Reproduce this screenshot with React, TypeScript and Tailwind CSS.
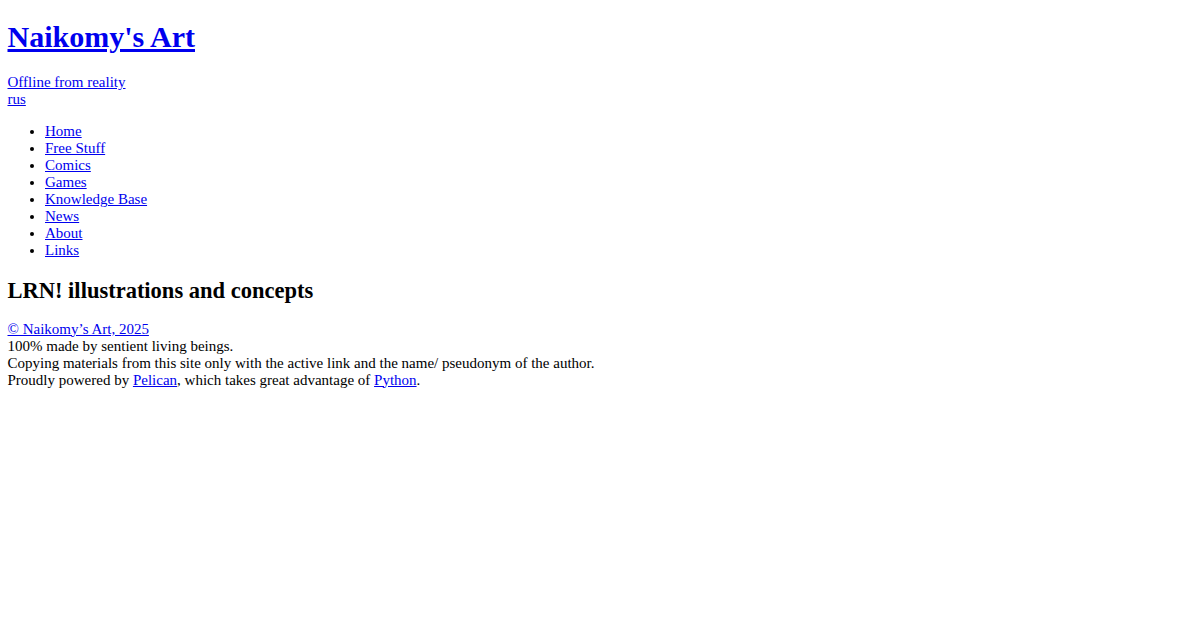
const links = ["Home", "Free Stuff", "Comics", "Games", "Knowledge Base", "News", "About", "Links"];

export default function App() {
  return (
    <div className="min-h-screen bg-white px-[7.5px] pt-[20.1px] pb-2 font-['Liberation_Serif','Times_New_Roman',serif] text-[15px] leading-[normal] text-black">
      <header>
        <h1 className="mb-[20.1px] text-[30px] font-bold">
          <a href="#" className="text-[#0000ee] underline">Naikomy's Art</a>
        </h1>
        <div>
          <a href="#" className="text-[#0000ee] underline">Offline from reality</a>
        </div>
        <div>
          <a href="#" className="text-[#0000ee] underline">rus</a>
        </div>
        <nav>
          <ul className="my-[15px] list-disc pl-[37.5px]">
            {links.map((l) => (
              <li key={l}>
                <a href="#" className="text-[#0000ee] underline">{l}</a>
              </li>
            ))}
          </ul>
        </nav>
      </header>
      <main>
        <h2 className="mt-[18.675px] mb-[16.7px] text-[22.5px] font-bold leading-[normal]">LRN! illustrations and concepts</h2>
      </main>
      <footer>
        <div>
          <a href="#" className="text-[#0000ee] underline">© Naikomy’s Art, 2025</a>
        </div>
        <div>100% made by sentient living beings.</div>
        <div>Copying materials from this site only with the active link and the name/ pseudonym of the author.</div>
        <div>
          Proudly powered by <a href="#" className="text-[#0000ee] underline">Pelican</a>, which takes great advantage of{" "}
          <a href="#" className="text-[#0000ee] underline">Python</a>.
        </div>
      </footer>
    </div>
  );
}
